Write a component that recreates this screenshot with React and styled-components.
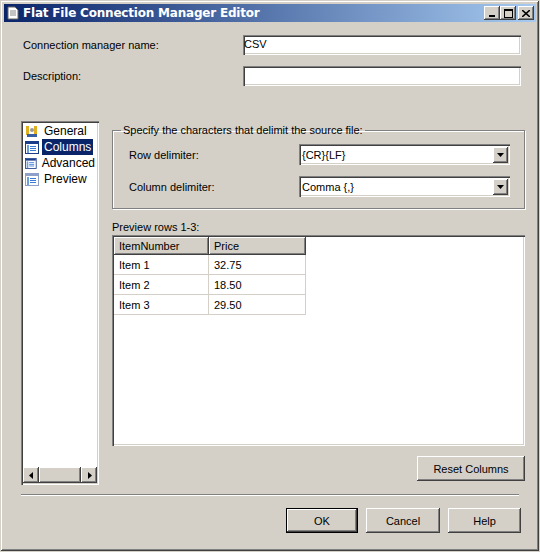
import React from "react";
import styled, { createGlobalStyle } from "styled-components";

const G = createGlobalStyle`
  html,body{margin:0;padding:0;background:#d4d0c8;}
  *{box-sizing:border-box;}
  body{font-family:"Liberation Sans",Tahoma,sans-serif;font-size:11px;color:#000;}
`;
const Win = styled.div`
  width:540px;height:552px;background:#d4d0c8;
  border:1px solid #d4d0c8;box-shadow:inset -1px -1px 0 #404040, inset 1px 1px 0 #fff, inset -2px -2px 0 #808080;
  padding:3px;display:flex;flex-direction:column;position:relative;
`;
const Title = styled.div`
  height:18px;display:flex;align-items:center;padding:0 2px 0 3px;gap:4px;
  background:linear-gradient(to right,#0a246a,#a6caf0);color:#fff;font-weight:bold;font-size:12px;
  font-family:"DejaVu Sans",sans-serif;letter-spacing:-0.2px;
`;
const TBtns = styled.div`margin-left:auto;display:flex;gap:0;`;
const TBtn = styled.div`
  width:16px;height:14px;background:#d4d0c8;margin-left:${p=>p.gap?2:0}px;
  box-shadow:inset -1px -1px 0 #404040, inset 1px 1px 0 #fff, inset -2px -2px 0 #808080;
  display:flex;align-items:center;justify-content:center;
`;
const Body = styled.div`flex:1;display:flex;flex-direction:column;padding:0 15px 0 16px;`;
const FieldRow = styled.div`display:flex;align-items:center;margin-top:${p=>p.mt}px;`;
const Label = styled.div`width:${p=>p.w}px;padding-left:${p=>p.pl||0}px;`;
const Input = styled.div`
  flex:1;height:20px;background:#fff;padding:2px 1px;line-height:15px;
  box-shadow:inset 1px 1px 0 #808080, inset 2px 2px 0 #404040, inset -1px -1px 0 #fff, inset -2px -2px 0 #d4d0c8;
`;
const Main = styled.div`display:flex;margin-top:35px;gap:13px;`;
const Nav = styled.div`
  width:78px;height:364px;background:#fff;display:flex;flex-direction:column;padding:2px;
  box-shadow:inset 1px 1px 0 #808080, inset 2px 2px 0 #404040, inset -1px -1px 0 #fff, inset -2px -2px 0 #d4d0c8;
  margin-left:1px;
`;
const NavItem = styled.div`display:flex;align-items:center;gap:3px;height:16px;padding-left:2px;`;
const NavText = styled.span`padding:1px 2px;${p=>p.sel&&"background:#0a246a;color:#fff;"}font-size:12px;`;
const Scroll = styled.div`margin-top:auto;height:16px;display:flex;background:#ece9e4;`;
const SBtn = styled.div`
  width:16px;height:16px;background:#d4d0c8;display:flex;align-items:center;justify-content:center;
  box-shadow:inset -1px -1px 0 #404040, inset 1px 1px 0 #fff, inset -2px -2px 0 #808080;
`;
const Thumb = styled(SBtn)`width:42px;`;
const Right = styled.div`flex:1;display:flex;flex-direction:column;`;
const Group = styled.fieldset`
  margin:0;margin-top:3px;height:85px;border:1px solid #808080;box-shadow:1px 1px 0 #fff, inset 1px 1px 0 #fff;
  padding:8px 14px 0 16px;display:flex;flex-direction:column;gap:11px;
  legend{padding:0 2px;margin-left:-8px;}
`;
const ComboRow = styled.div`display:flex;align-items:center;`;
const Combo = styled.div`
  width:211px;height:21px;background:#fff;display:flex;align-items:center;padding:2px;
  box-shadow:inset 1px 1px 0 #808080, inset 2px 2px 0 #404040, inset -1px -1px 0 #fff, inset -2px -2px 0 #d4d0c8;
  span{flex:1;padding-left:1px;}
`;
const Drop = styled(SBtn)`width:15px;height:16px;`;
const PLabel = styled.div`margin-top:12px;height:13px;`;
const Grid = styled.div`
  margin-top:1px;height:211px;background:#fff;padding:2px;
  box-shadow:inset 1px 1px 0 #808080, inset 2px 2px 0 #404040, inset -1px -1px 0 #fff, inset -2px -2px 0 #d4d0c8;
`;
const Table = styled.div`display:grid;grid-template-columns:95px 97px;width:192px;`;
const Head = styled.div`
  height:18px;background:#d4d0c8;padding:2px 5px;line-height:14px;
  box-shadow:inset -1px -1px 0 #404040, inset 1px 1px 0 #fff, inset -2px -2px 0 #808080;
`;
const Cell = styled.div`height:20px;padding:3px 5px;border-right:1px solid #d4d0c8;border-bottom:1px solid #d4d0c8;line-height:14px;`;
const BtnRow = styled.div`display:flex;justify-content:flex-end;margin-top:${p=>p.mt}px;gap:${p=>p.gap||0}px;padding-right:${p=>p.pr||0}px;`;
const Btn = styled.div`
  width:${p=>p.w}px;height:25px;display:flex;align-items:center;justify-content:center;background:#d4d0c8;
  box-shadow:${p=>p.def?"inset 0 0 0 1px #000, inset -2px -2px 0 #404040, inset 2px 2px 0 #fff, inset -3px -3px 0 #808080":"inset -1px -1px 0 #404040, inset 1px 1px 0 #fff, inset -2px -2px 0 #808080"};
`;
const Sep = styled.div`height:2px;margin-top:9px;border-top:1px solid #808080;border-bottom:1px solid #fff;margin-left:1px;margin-right:2px;`;

const Tri = ({d}) => <svg width="7" height="7" viewBox="0 0 7 7"><path d={d} fill="#000"/></svg>;
const ListIcon = ({c="#1a3d8a"}) => (
  <svg width="14" height="13" viewBox="0 0 14 13"><rect x="0.5" y="0.5" width="13" height="12" fill="#fff" stroke={c}/><rect x="1" y="1" width="12" height="2" fill={c}/>
  {[5,7,9].map(y=><rect key={y} x="5" y={y} width="6" height="1" fill="#3a7bd5"/>)}<rect x="2" y="4" width="2" height="8" fill="#6aa0e0"/></svg>
);
const GenIcon = () => (
  <svg width="14" height="13" viewBox="0 0 14 13"><rect x="1" y="1" width="3" height="9" fill="#e0b020"/><rect x="9" y="1" width="3" height="9" fill="#e0b020"/><rect x="2" y="9" width="10" height="3" fill="#3a5fa0"/><circle cx="7" cy="5" r="2" fill="#999"/></svg>
);

export default function App(){
  return (<><G/>
  <Win>
    <Title>
      <svg width="12" height="14" viewBox="0 0 12 14"><path d="M1 1h7l3 3v9H1z" fill="#fff" stroke="#666"/><path d="M3 5h6M3 7h6M3 9h6" stroke="#888"/></svg>
      Flat File Connection Manager Editor
      <TBtns>
        <TBtn><svg width="8" height="8"><rect x="1" y="6" width="6" height="2" fill="#000"/></svg></TBtn>
        <TBtn><svg width="9" height="9"><rect x="0.5" y="0.5" width="8" height="8" fill="none" stroke="#000"/><rect x="0" y="0" width="9" height="2" fill="#000"/></svg></TBtn>
        <TBtn gap><svg width="8" height="7"><path d="M0 0L8 7M8 0L0 7" stroke="#000" strokeWidth="1.6"/></svg></TBtn>
      </TBtns>
    </Title>
    <Body>
      <FieldRow mt={13}><Label w={223} pl={3}>Connection manager name:</Label><Input>CSV</Input></FieldRow>
      <FieldRow mt={11}><Label w={223} pl={3}>Description:</Label><Input/></FieldRow>
      <Main>
        <Nav>
          <NavItem><GenIcon/><NavText>General</NavText></NavItem>
          <NavItem><ListIcon/><NavText sel>Columns</NavText></NavItem>
          <NavItem><ListIcon/><NavText>Advanced</NavText></NavItem>
          <NavItem><ListIcon c="#8fa0c8"/><NavText>Preview</NavText></NavItem>
          <Scroll>
            <SBtn><Tri d="M5 0L1 3.5L5 7z"/></SBtn><Thumb/><span style={{flex:1}}/><SBtn><Tri d="M2 0L6 3.5L2 7z"/></SBtn>
          </Scroll>
        </Nav>
        <Right>
          <Group>
            <legend>Specify the characters that delimit the source file:</legend>
            <ComboRow><Label w={170}>Row delimiter:</Label><Combo><span>{"{CR}{LF}"}</span><Drop><Tri d="M0 2h7L3.5 6z"/></Drop></Combo></ComboRow>
            <ComboRow><Label w={170}>Column delimiter:</Label><Combo><span>{"Comma {,}"}</span><Drop><Tri d="M0 2h7L3.5 6z"/></Drop></Combo></ComboRow>
          </Group>
          <PLabel>Preview rows 1-3:</PLabel>
          <Grid>
            <Table>
              <Head>ItemNumber</Head><Head>Price</Head>
              {[["Item 1","32.75"],["Item 2","18.50"],["Item 3","29.50"]].map(r=>r.map((c,i)=><Cell key={r[0]+i}>{c}</Cell>))}
            </Table>
          </Grid>
          <BtnRow mt={10}><Btn w={108}>Reset Columns</Btn></BtnRow>
        </Right>
      </Main>
      <Sep/>
      <BtnRow mt={12} gap={8}><Btn w={72} def>OK</Btn><Btn w={74}>Cancel</Btn><Btn w={73}>Help</Btn></BtnRow>
    </Body>
  </Win></>);
}
